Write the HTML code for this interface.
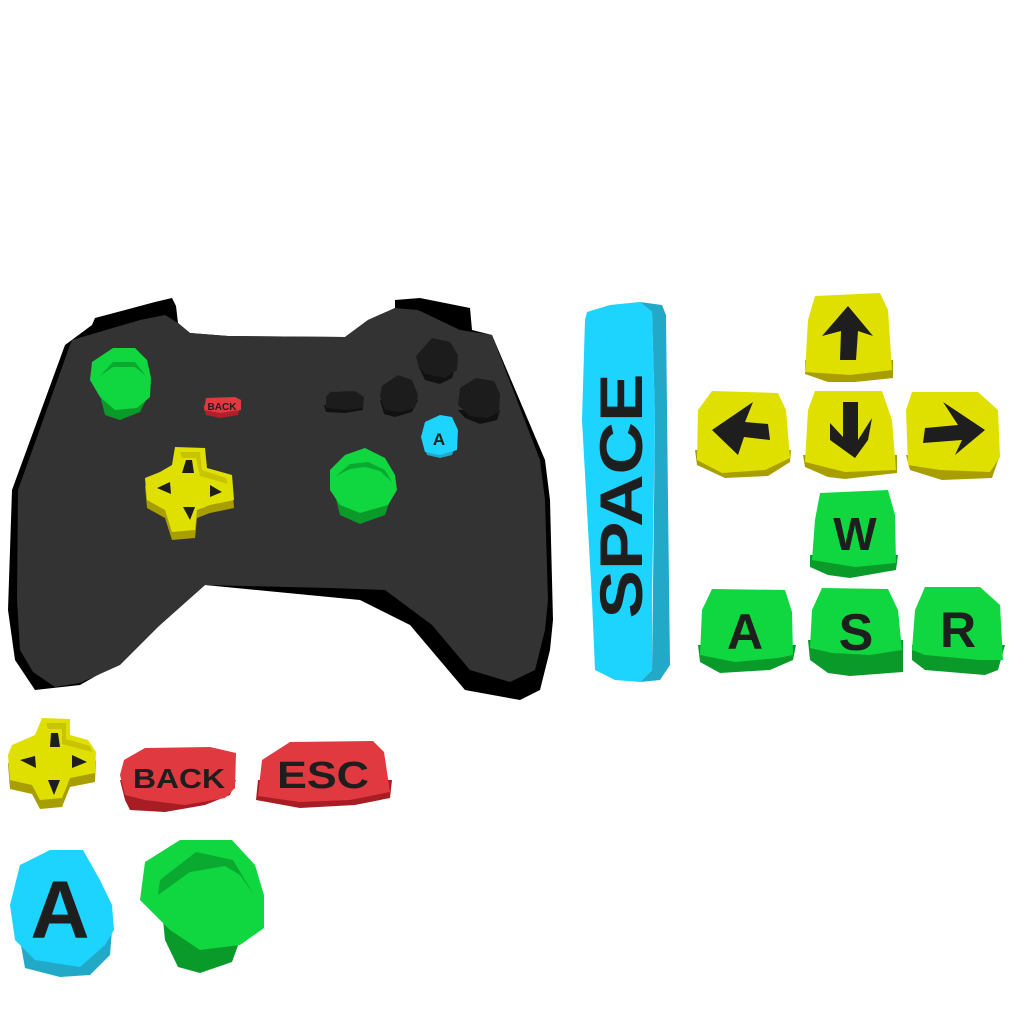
<!DOCTYPE html>
<html><head><meta charset="utf-8"><style>
html,body{margin:0;padding:0;background:#fff;width:1024px;height:1024px;overflow:hidden}
svg{display:block}
text{font-family:"Liberation Sans",sans-serif;font-weight:bold;fill:#1e1e1e}
</style></head><body>
<svg width="1024" height="1024" viewBox="0 0 1024 1024" xmlns="http://www.w3.org/2000/svg">
<polygon fill="#000" points="92,325 95,318 155,302 172,298 176,306 178,323 190,333 228,336 345,337 368,320 395,308 395,300 420,298 470,308 472,330 492,335 545,460 550,500 553,620 550,650 540,690 520,700 465,690 410,625 360,600 205,585 160,625 115,665 80,685 35,690 15,660 8,610 12,490 65,345"/>
<polygon fill="#333" points="72,340 140,320 165,315 178,323 190,333 228,336 345,337 368,320 395,308 418,310 460,330 492,335 540,460 545,500 548,600 545,630 535,670 510,682 470,670 432,625 385,590 330,588 205,585 160,625 120,665 80,683 55,687 33,672 20,650 17,600 18,490 70,345"/>
<polygon fill="#0a9a2a" points="100,395 150,392 140,412 120,420 105,415"/>
<polygon fill="#10d640" points="92,362 113,348 135,348 147,360 151,378 150,397 137,408 115,410 100,397 90,380"/>
<polygon fill="#0aaa30" points="100,376 113,362 135,362 146,376 135,367 113,367"/>
<polygon fill="#0a9a2a" points="335,495 392,495 385,515 360,524 340,515"/>
<polygon fill="#10d640" points="330,470 345,455 365,448 385,458 395,475 397,490 388,505 360,513 340,505 330,490"/>
<polygon fill="#0aaa30" points="336,476 350,464 368,462 385,470 392,482 380,471 365,467 350,469"/>
<polygon fill="#b02028" points="203,405 241,405 238,415 220,418 206,415"/>
<polygon fill="#e03a40" points="206,398 235,397 241,400 241,410 220,413 204,410"/>
<text x="222" y="410" font-size="10" text-anchor="middle">BACK</text>
<!-- dpad -->
<polygon fill="#a89e00" points="175,455 205,456 207,476 232,483 234,508 210,513 197,518 195,538 172,540 165,518 147,508 145,486 160,480 172,473"/>
<polygon fill="#e0e000" points="175,447 205,448 207,468 232,475 234,500 210,505 197,510 195,530 172,532 165,510 147,500 145,478 160,472 172,465"/>
<polygon fill="#c8c400" points="180,452 200,452 202,470 226,478 228,484 200,476 196,458 182,458"/>
<polygon fill="#1e1e1e" points="186,460 192,460 194,473 182,473"/>
<polygon fill="#1e1e1e" points="157,488 170,482 171,494"/>
<polygon fill="#1e1e1e" points="210,485 222,492 210,497"/>
<polygon fill="#1e1e1e" points="183,507 195,507 190,520"/>
<polygon fill="#111" points="324,405 362,405 363,410 345,413 326,412"/>
<polygon fill="#1c1c1c" points="330,392 355,391 364,397 363,408 345,410 326,408 326,397"/>
<polygon fill="#111" points="380,400 418,400 412,412 395,417 384,414"/>
<polygon fill="#1c1c1c" points="382,386 398,375 412,380 418,395 415,408 400,412 385,410 380,396"/>
<polygon fill="#111" points="418,365 456,365 452,378 440,384 425,380"/>
<polygon fill="#1c1c1c" points="416,356 432,338 450,342 458,355 457,370 445,378 425,374 418,365"/>
<polygon fill="#111" points="458,410 500,410 497,420 480,424 465,418"/>
<polygon fill="#1c1c1c" points="460,388 476,378 494,381 500,394 499,412 488,418 470,416 458,405"/>
<polygon fill="#22a9c8" points="424,445 456,445 452,455 440,458 427,455"/>
<polygon fill="#1dd3ff" points="425,422 440,415 452,417 458,430 457,450 440,455 425,452 421,437"/>
<text x="439" y="445" font-size="17" text-anchor="middle">A</text>

<polygon fill="#22a9c8" points="640,302 662,305 666,315 668,500 670,665 660,680 640,682 652,670 655,420 652,312"/>
<polygon fill="#1dd3ff" points="587,312 610,305 640,302 652,312 655,420 652,600 652,670 640,682 615,680 595,670 592,600 582,420 585,320"/>
<text transform="translate(642,496) rotate(-90)" font-size="60" text-anchor="middle" textLength="245" lengthAdjust="spacingAndGlyphs">SPACE</text>

<polygon fill="#a89e00" points="805,360 893,360 893,378 855,382 828,382 805,374"/>
<polygon fill="#e0e000" points="815,296 880,293 888,310 892,370 850,375 805,372 808,320"/>
<polygon fill="#1e1e1e" points="822,336 848,306 873,336 858,331 856,360 840,360 841,331"/>
<polygon fill="#a89e00" points="695,450 791,450 790,462 768,476 725,478 697,465"/>
<polygon fill="#e0e000" points="712,391 778,393 786,410 790,458 765,470 722,473 697,460 698,410"/>
<polygon fill="#1e1e1e" points="712,430 753,402 745,422 768,424 770,440 744,437 738,455"/>
<polygon fill="#a89e00" points="803,455 897,455 897,473 845,479 828,477 805,467"/>
<polygon fill="#e0e000" points="815,391 882,391 892,420 896,470 845,472 805,462 808,410"/>
<polygon fill="#1e1e1e" points="843,402 858,402 858,440 872,418 868,440 855,458 830,440 830,423 843,437"/>
<polygon fill="#a89e00" points="906,455 1000,455 992,478 942,480 910,470"/>
<polygon fill="#e0e000" points="912,392 978,392 998,410 1000,457 990,472 940,470 908,465 906,410"/>
<polygon fill="#1e1e1e" points="943,402 985,430 955,455 962,440 923,443 925,428 958,425"/>

<polygon fill="#0a9a2a" points="810,555 898,555 896,570 850,578 828,575 810,567"/>
<polygon fill="#10d640" points="820,493 888,490 895,515 896,563 855,567 812,560 815,520"/>
<text x="855" y="550" font-size="46" text-anchor="middle">W</text>
<polygon fill="#0a9a2a" points="698,645 796,645 793,660 770,670 720,673 700,662"/>
<polygon fill="#10d640" points="712,589 785,590 792,612 793,655 778,658 735,662 700,655 702,610"/>
<text x="745" y="649" font-size="50" text-anchor="middle">A</text>
<polygon fill="#0a9a2a" points="808,640 903,640 903,672 850,676 828,673 810,660"/>
<polygon fill="#10d640" points="822,588 888,589 898,610 902,650 870,655 832,653 810,648 812,610"/>
<text x="856" y="650" font-size="52" text-anchor="middle">S</text>
<polygon fill="#0a9a2a" points="912,645 1005,645 998,670 985,675 925,670 912,660"/>
<polygon fill="#10d640" points="925,587 980,587 1000,605 1003,660 980,660 925,655 912,650 915,610"/>
<text x="958" y="647" font-size="50" text-anchor="middle">R</text>

<!-- bottom dpad -->
<polygon fill="#a89e00" points="42,727 70,728 70,744 88,749 96,761 95,782 70,787 62,807 40,809 32,794 10,789 8,764 12,754 35,744"/>
<polygon fill="#e0e000" points="42,718 70,719 70,735 88,740 96,752 95,773 70,778 62,798 40,800 32,785 10,780 8,755 12,745 35,735"/>
<polygon fill="#c8c400" points="46,723 66,723 66,739 90,746 92,752 62,744 62,729 48,729"/>
<polygon fill="#1e1e1e" points="51,733 58,733 60,747 50,747"/>
<polygon fill="#1e1e1e" points="20,760 35,756 36,768"/>
<polygon fill="#1e1e1e" points="72,755 87,762 72,768"/>
<polygon fill="#1e1e1e" points="48,780 60,780 54,795"/>

<polygon fill="#a81c24" points="120,780 236,780 230,795 205,805 165,812 130,810 125,800"/>
<polygon fill="#e03a40" points="145,748 210,747 236,753 235,788 225,798 185,805 145,800 125,795 120,775 124,760"/>
<text x="179" y="788" font-size="28" text-anchor="middle" textLength="92" lengthAdjust="spacingAndGlyphs">BACK</text>
<polygon fill="#a81c24" points="258,780 392,780 390,798 355,805 300,808 256,800"/>
<polygon fill="#e03a40" points="290,742 373,741 384,752 390,792 350,800 300,802 258,796 262,760"/>
<text x="323" y="788" font-size="38" text-anchor="middle" textLength="92" lengthAdjust="spacingAndGlyphs">ESC</text>

<polygon fill="#22a9c8" points="20,940 112,930 110,955 90,975 60,977 25,968"/>
<polygon fill="#1dd3ff" points="20,865 50,850 83,850 100,880 112,905 114,930 105,945 80,967 35,960 15,940 10,905"/>
<text x="60" y="938" font-size="82" text-anchor="middle">A</text>

<polygon fill="#0a9a2a" points="162,910 243,920 240,940 232,962 200,973 178,967 165,940"/>
<polygon fill="#10d640" points="145,862 180,840 232,840 255,865 264,895 264,928 240,945 200,950 170,930 140,900"/>
<polygon fill="#0aaa30" points="158,895 160,880 196,852 233,860 254,895 240,875 225,866 190,872"/>
</svg>
</body></html>
